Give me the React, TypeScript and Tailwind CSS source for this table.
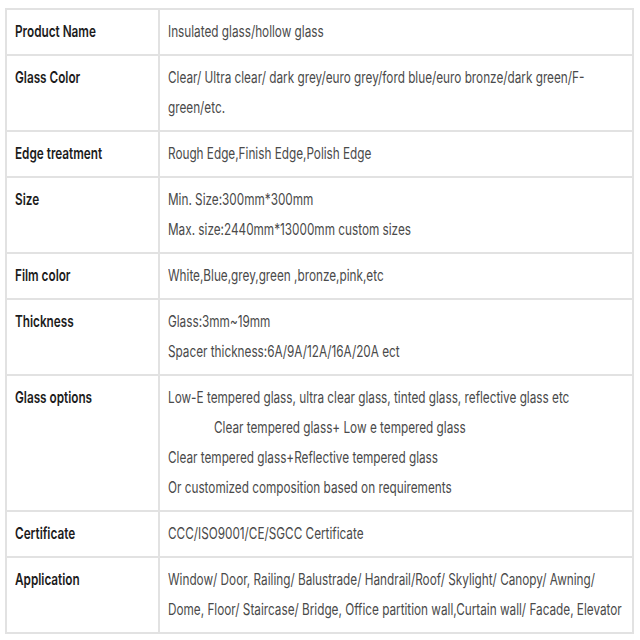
const rows: { label: string; lines: { text: string; indent?: boolean }[] }[] = [
  { label: "Product Name", lines: [{ text: "Insulated glass/hollow glass" }] },
  {
    label: "Glass Color",
    lines: [
      { text: "Clear/ Ultra clear/ dark grey/euro grey/ford blue/euro bronze/dark green/F-" },
      { text: "green/etc." },
    ],
  },
  { label: "Edge treatment", lines: [{ text: "Rough Edge,Finish Edge,Polish Edge" }] },
  {
    label: "Size",
    lines: [{ text: "Min. Size:300mm*300mm" }, { text: "Max. size:2440mm*13000mm custom sizes" }],
  },
  { label: "Film color", lines: [{ text: "White,Blue,grey,green ,bronze,pink,etc" }] },
  {
    label: "Thickness",
    lines: [{ text: "Glass:3mm~19mm" }, { text: "Spacer thickness:6A/9A/12A/16A/20A ect" }],
  },
  {
    label: "Glass options",
    lines: [
      { text: "Low-E tempered glass, ultra clear glass, tinted glass, reflective glass etc" },
      { text: "Clear tempered glass+ Low e tempered glass", indent: true },
      { text: "Clear tempered glass+Reflective tempered glass" },
      { text: "Or customized composition based on requirements" },
    ],
  },
  { label: "Certificate", lines: [{ text: "CCC/ISO9001/CE/SGCC Certificate" }] },
  {
    label: "Application",
    lines: [
      { text: "Window/ Door, Railing/ Balustrade/ Handrail/Roof/ Skylight/ Canopy/ Awning/" },
      { text: "Dome, Floor/ Staircase/ Bridge, Office partition wall,Curtain wall/ Facade, Elevator" },
    ],
  },
];

export default function App() {
  return (
    <div className="w-[640px] h-[640px] bg-white pt-[8px] pl-[5px] font-['Inter',sans-serif]">
      <table className="w-[629px] border-collapse border-2 border-[#e2e2e2] table-fixed">
        <colgroup>
          <col className="w-[153px]" />
          <col />
        </colgroup>
        <tbody>
          {rows.map((row) => (
            <tr key={row.label}>
              <td className="border-2 border-[#e2e2e2] align-top px-[8px] pt-[6px] pb-[8px] leading-[30px]">
                <div className="origin-left scale-x-[0.735] whitespace-nowrap text-[16px] font-semibold text-[#1c1c1c]">
                  {row.label}
                </div>
              </td>
              <td className="border-2 border-[#e2e2e2] align-top px-[8px] pt-[6px] pb-[8px] leading-[30px]">
                {row.lines.map((line, i) => (
                  <div
                    key={i}
                    className={`origin-left scale-x-[0.735] whitespace-nowrap text-[16px] text-[#4a4a4a] ${line.indent ? "ml-[46px]" : ""}`}
                  >
                    {line.text}
                  </div>
                ))}
              </td>
            </tr>
          ))}
        </tbody>
      </table>
    </div>
  );
}
